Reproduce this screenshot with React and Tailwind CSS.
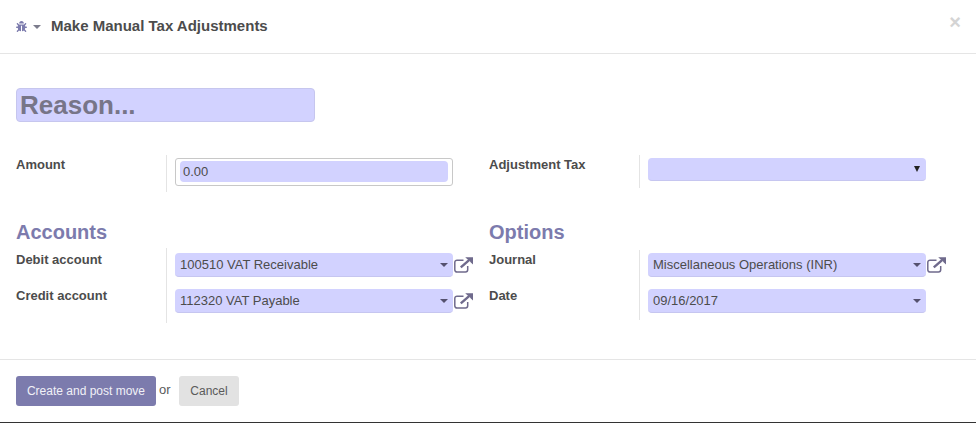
import { FaBug } from 'react-icons/fa';

const FONT = "font-['Liberation_Sans',Arial,sans-serif]";

function ExternalIcon() {
  return (
    <svg width="19" height="16" viewBox="0 0 19 16" fill="none" className="shrink-0 text-[#6f6a8c]">
      <path d="M9.5 3.2H3a2.2 2.2 0 0 0-2.2 2.2v7.4A2.2 2.2 0 0 0 3 15h8.5a2.2 2.2 0 0 0 2.2-2.2V9" stroke="currentColor" strokeWidth="1.5" />
      <path d="M6.8 10.4L15.4 2.8" stroke="currentColor" strokeWidth="2.4" />
      <path d="M11.2 0.2H19V7.6L16.8 5.4 15.4 3.4 13.4 2.2Z" fill="currentColor" />
    </svg>
  );
}

function SelectField({ value, link, dark }) {
  return (
    <div className="flex items-center gap-[1px]">
      <div className={`w-[278px] ${dark ? 'h-[23px]' : 'h-6'} rounded bg-[#d2d2ff] border-b border-[#c6c6f0] flex items-center justify-between pl-[5px] pr-[5px] text-[13px] text-[#4c4c4c]`}>
        <span>{value}</span>
        {dark ? (
          <span className="w-0 h-0 border-x-[3px] border-x-transparent border-t-[6px] border-t-[#222222] mr-[1px]" />
        ) : (
          <span className="w-0 h-0 border-x-[4px] border-x-transparent border-t-[4px] border-t-[#55516f]" />
        )}
      </div>
      {link && <ExternalIcon />}
    </div>
  );
}

function Row({ label, height, labelPad, fieldPad, children }) {
  return (
    <div className={`flex ${height}`}>
      <div className={`w-[150px] text-[13px] font-bold text-[#4c4c4c] leading-[18px] ${labelPad}`}>{label}</div>
      <div className={`border-l border-[#e4e4e4] pl-2 ${fieldPad}`}>{children}</div>
    </div>
  );
}

export default function App() {
  return (
    <div className={`${FONT} w-[976px] h-[423px] bg-white flex flex-col overflow-hidden border-b border-[#333333]`}>
      {/* Header */}
      <header className="h-[54px] shrink-0 border-b border-[#e5e5e5] flex items-center pl-4 pr-[15px]">
        <FaBug className="w-[11px] h-[11px] text-[#7c7bad] mr-[6px]" />
        <span className="w-0 h-0 border-x-[4px] border-x-transparent border-t-[4px] border-t-[#7c7c8c] mr-[10px]" />
        <h1 className="text-[15px] font-bold text-[#4c4c4c]">Make Manual Tax Adjustments</h1>
        <span className="ml-auto text-[20px] leading-none font-bold text-[#d4d4d4] pb-[9px]">×</span>
      </header>

      {/* Form */}
      <main className="flex-1 px-4 pt-[34px]">
        <div className="w-[299px] h-[34px] rounded bg-[#d2d2ff] border border-[#c6c6ee] flex items-center pl-[3px] text-[26px] font-bold text-[#777588]">
          Reason...
        </div>

        <div className="flex mt-[33px] h-[37px]">
          <div className="w-[473px] shrink-0">
            <Row label="Amount" height="h-[37px]" labelPad="pt-px" fieldPad="pt-[3px]">
              <div className="w-[278px] h-[28px] rounded-[3px] border border-[#c8c8c8] pt-[2px] px-[4px]">
                <div className="h-[21px] rounded bg-[#d2d2ff] flex items-center pl-[3px] text-[13px] text-[#4c4c4c]">0.00</div>
              </div>
            </Row>
          </div>
          <div>
            <Row label="Adjustment Tax" height="h-[33px]" labelPad="pt-px" fieldPad="pt-[3px]">
              <SelectField dark />
            </Row>
          </div>
        </div>

        <div className="flex mt-[27px]">
          <div className="w-[473px] shrink-0">
            <h2 className="text-[20px] leading-[26px] font-bold text-[#7c7bad]">Accounts</h2>
            <div className="mt-[3px]">
              <Row label="Debit account" height="h-[36px]" labelPad="pt-[3px]" fieldPad="pt-[5px]">
                <SelectField value="100510 VAT Receivable" link />
              </Row>
              <Row label="Credit account" height="h-[39px]" labelPad="pt-[3px]" fieldPad="pt-[5px]">
                <SelectField value="112320 VAT Payable" link />
              </Row>
            </div>
          </div>
          <div>
            <h2 className="text-[20px] leading-[26px] font-bold text-[#7c7bad]">Options</h2>
            <div className="mt-[5px]">
              <Row label="Journal" height="h-[36px]" labelPad="pt-px" fieldPad="pt-[3px]">
                <SelectField value="Miscellaneous Operations (INR)" link />
              </Row>
              <Row label="Date" height="h-[34px]" labelPad="pt-px" fieldPad="pt-[3px]">
                <SelectField value="09/16/2017" />
              </Row>
            </div>
          </div>
        </div>
      </main>

      {/* Footer */}
      <footer className="h-[63px] shrink-0 border-t border-[#e5e5e5] flex items-start pl-4 pt-4 text-[13px]">
        <button className="w-[140px] h-[30px] rounded-[3px] bg-[#7c7bad] text-[#f1f1f7] text-[12px]">Create and post move</button>
        <span className="ml-[3px] text-[#5a5a5a] mt-[5px] w-5 leading-[18px]">or</span>
        <button className="w-[60px] h-[30px] rounded-[3px] bg-[#e2e2e2] text-[#5a5a5a] text-[12px]">Cancel</button>
      </footer>
    </div>
  );
}
